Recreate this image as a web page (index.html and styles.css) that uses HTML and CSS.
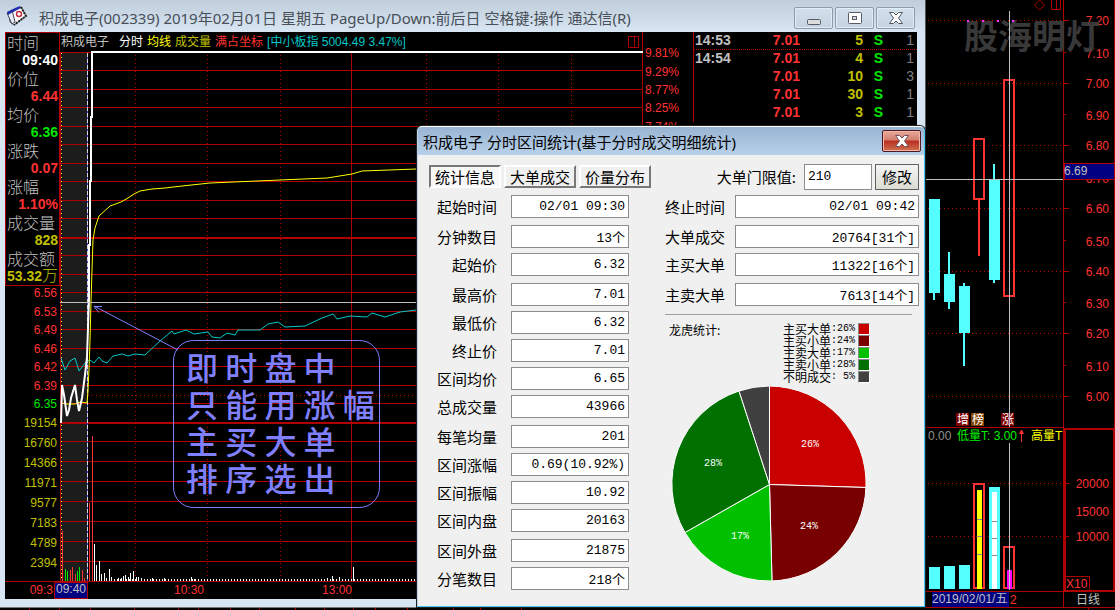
FILE: index.html
```html
<!DOCTYPE html>
<html lang="zh-CN">
<head>
<meta charset="utf-8">
<title>积成电子(002339)</title>
<link rel="stylesheet" href="styles.css">
</head>
<body>
<main class="desktop">
  <div class="left">
    <section class="window">
      <header class="titlebar">
        <svg class="app-icon" width="22" height="22" viewBox="0 0 22 22">
          <path d="M3 9L15 2l5 9-12 9-4-3z" fill="#fff" stroke="#555"/>
          <path d="M1 8l5-3 3 12-3 2z" fill="#e8ecf4" stroke="#445"/>
          <path d="M1 7l8-4 5-2 1 2-8 4-5 3z" fill="#2030b0"/>
          <path d="M15 2l5 9-12 9" fill="none" stroke="#222" stroke-width="2" stroke-dasharray="2 1"/>
          <circle cx="13" cy="9" r="2.5" fill="none" stroke="#c03040" stroke-width="1.5"/>
        </svg>
        <h1 class="title">积成电子(002339) 2019年02月01日 星期五 PageUp/Down:前后日 空格键:操作 通达信(R)</h1>
        <div class="win-buttons">
          <button class="win-btn" aria-label="最小化"><svg width="14" height="14" viewBox="0 0 14 14"><rect x=".5" y="8.500" width="13" height="5" rx="1" fill="#ddd" stroke="#555b66"/></svg></button>
          <button class="win-btn" aria-label="还原"><svg width="14" height="14" viewBox="0 0 14 14"><rect x=".5" y="1.500" width="13" height="11" rx="1" fill="#fff" stroke="#555b66"/><rect x="4.500" y="5.500" width="4" height="3" fill="#dde" stroke="#555b66"/></svg></button>
          <button class="win-btn" aria-label="关闭"><svg width="14" height="14" viewBox="0 0 14 14"><path d="M.5 1.500h4L7 4l2.500-2.500h4L9.500 7l4 5.500h-4L7 10l-2.500 2.500h-4l4-5.500z" fill="#fff" stroke="#555b66"/></svg></button>
        </div>
      </header>
      <div class="body">
        <aside class="side">
          <dl class="info">
            <dt>时间</dt><dd class="white">09:40</dd>
            <dt>价位</dt><dd class="red">6.44</dd>
            <dt>均价</dt><dd class="green">6.36</dd>
            <dt>涨跌</dt><dd class="red">0.07</dd>
            <dt>涨幅</dt><dd class="red">1.10%</dd>
            <dt>成交量</dt><dd class="gold">828</dd>
            <dt>成交额</dt><dd class="gold">53.32<span class="unit">万</span></dd>
          </dl>
          <svg class="chart-text" width="55" height="313" viewBox="5 286 55 313" text-anchor="end">
            <g class="f-red"><text x="57" y="297">6.56</text><text x="57" y="316">6.53</text><text x="57" y="334">6.49</text><text x="57" y="353">6.46</text><text x="57" y="371">6.42</text><text x="57" y="390">6.39</text></g>
            <text class="f-green" x="57" y="408">6.35</text>
            <g class="f-gold"><text x="57" y="427">19154</text><text x="57" y="447">16760</text><text x="57" y="467">14366</text><text x="57" y="487">11971</text><text x="57" y="507">9577</text><text x="57" y="527">7183</text><text x="57" y="547">4789</text><text x="57" y="567">2394</text></g>
            <path class="grid" d="M5 581.500H60"/>
            <text class="f-red" x="53" y="594">09:3</text>
          </svg>
        </aside>
        <div class="plot">
          <div class="plot-head">
            <span class="silver name">积成电子</span><span class="white">分时</span><span class="yellow">均线</span><span class="gold">成交量</span><span class="red">满占坐标</span><span class="cyan">[中小板指 5004.49 3.47%]</span>
            <svg class="pane-icon" width="12" height="12" viewBox="0 0 12 12"><path class="grid" d="M.5.500h10v11H.5zM6.500.500v11"/></svg>
          </div>
          <svg class="chart-text canvas" width="633" height="548" viewBox="60 51 633 548">
            <rect x="61" y="53" width="26" height="528" fill="#1c1c1c"/>
            <path class="grid" d="M60 52.500H643M60 70.500H643M60 89.500H643M60 107.500H643M60 126.500H643M60 144.500H643M60 163.500H643M60 181.500H643M60 200.500H643M60 218.500H643M60 255.500H643M60 274.500H643M60 292.500H643M60 311.500H643M60 329.500H643M60 348.500H643M60 366.500H643M60 385.500H643M60 403.500H643M60 441.500H643M60 461.500H643M60 481.500H643M60 501.500H643M60 521.500H643M60 541.500H643M60 561.500H643M60 581.500H643M60.500 52V582M351.500 52V582M642.500 51V599"/>
            <path class="grid thick" d="M60 238H643M60 423H643"/>
            <path class="grid dots" d="M135.500 55V581M207.500 55V581M280.500 55V581M426.500 55V581M498.500 55V581M571.500 55V581M88 395.500H643"/>
            <path d="M61.500 53V581" stroke="#ff0" stroke-dasharray="1 3"/>
            <path d="M87.500 53V581" stroke="#4848c8"/>
            <path d="M87.500 53V581" stroke="#d8d8d8" stroke-dasharray="4 2"/>
            <path d="M62.500 531V581M70.500 570V581M72.500 567V581M75.500 574V581M82.500 570V581M84.500 578V581M89.500 503V581M92.500 436V581" stroke="#ff3232"/>
            <path d="M65.500 569V581M67.500 571V581M77.500 571V581M79.500 567V581" stroke="#00e600"/>
            <path d="M94.500 544V581M96.500 565V581M99.500 561V581M101.500 574V581M104.500 573V581M106.500 578V581M109.500 569V581M111.500 577V581M118.500 578V581M121.500 578V581M123.500 576V581M125.500 575V581M128.500 577V581M130.500 573V581M133.500 571V581M136.500 577V581M138.500 577V581M141.500 578V581M152.500 578V581M164.500 578V581M191.500 577V581M194.500 579V581M332.500 576V581M327.500 578V581M339.500 577V581M353.500 567V581M372.500 579V581M402.500 579V581" stroke="#fff"/>
            <path d="M114 580H416" stroke="#fff" stroke-width="2" stroke-dasharray="1 2"/>
            <path d="M61 358l4 12 5-9 5-3 4 13 7-9 4-2 4 3 5-6 3 4 5 2 6-7 9-2 6 2 7-2 10 1 15-14 12-10 2 3 12-4 8 4 14-2 4 5 8 1 7-5 8 2 3-5h22l8-6 10-2 7 5 20-1 17-8 11-4 4 5 13-3 17 1 5-4 13 4 15-5 16-2" fill="none" stroke="#00c8c8"/>
            <path d="M62 403l5 1h8l5-2 7 1 1-12 1-22 1-29 1-38 1-32 1-30 2-12 4-12 11-10 11-4 7-4 6-4 6-3 12-2 13-1 17-2 28-3 70-3 47-2 25-4 10-3 54-2" fill="none" stroke="#ff0"/>
            <path d="M61 423l1-38 2 10 3 21 2-6 2-12 4-13 2 15 2 11 3-13 3-23 2-18 2-57V245h1V181h1V117h1V52H643" fill="none" stroke="#fff" stroke-width="2"/>
            <path d="M60 302.500H643" stroke="#c0c0c0"/>
            <g stroke="#8080ff" fill="none">
              <path d="M178 350L94 306M102 306.500H94l5 6"/>
              <rect x="173.500" y="340.500" width="206" height="167" rx="20"/>
            </g>
            <g class="note"><text x="186" y="380">即 时 盘 中</text><text x="186" y="417">只 能 用 涨 幅</text><text x="186" y="454">主 买 大 单</text><text x="186" y="491">排 序 选 出</text></g>
            <rect x="54.500" y="582.500" width="33" height="16" fill="#000080" stroke="#b00000"/>
            <text class="f-silver" x="56" y="593">09:40</text>
            <g class="f-red"><text x="174" y="594">10:30</text><text x="322" y="594">13:00</text><text x="645" y="57">9.81%</text><text x="645" y="76">9.29%</text><text x="645" y="94">8.77%</text><text x="645" y="112">8.25%</text><text x="645" y="131">7.74%</text></g>
          </svg>
        </div>
        <table class="ticks">
          <tr class="ruled"><td class="t">14:53</td><td class="p">7.01</td><td class="v">5</td><td class="s">S</td><td class="n">1</td></tr>
          <tr><td class="t">14:54</td><td class="p">7.01</td><td class="v">4</td><td class="s">S</td><td class="n">1</td></tr>
          <tr><td class="t"></td><td class="p">7.01</td><td class="v">10</td><td class="s">S</td><td class="n">3</td></tr>
          <tr><td class="t"></td><td class="p">7.01</td><td class="v">30</td><td class="s">S</td><td class="n">1</td></tr>
          <tr><td class="t"></td><td class="p">7.01</td><td class="v">3</td><td class="s">S</td><td class="n">1</td></tr>
        </table>
      </div>
    </section>
    <svg class="strip" width="925" height="2" viewBox="0 0 925 2"><path class="grid" d="M29.500 0v2M59.500 0v2M90.500 0v2M134.500 0v2M178.500 0v2M198.500 0v2M230.500 0v2M259.500 0v2M295.500 0v2M324.500 0v2M353.500 0v2M375.500 0v2M407.500 0v2M453.500 0v2M480.500 0v2M521.500 0v2"/></svg>
  </div>

  <section class="daily">
    <svg class="chart-text" width="189" height="610" viewBox="926 0 189 610">
      <path class="grid dots" d="M928 20.500H1063M928 83.500H1063M928 145.500H1063M928 208.500H1063M928 271.500H1063M928 333.500H1063M928 396.500H1063M928 483.500H1063M928 536.500H1063"/>
      <path class="grid" d="M1063.500 0V607M1114.500 0V428M1063 20.500h6M1063 52.500h3M1063 83.500h6M1063 114.500h3M1063 145.500h6M1063 208.500h6M1063 240.500h3M1063 271.500h6M1063 302.500h3M1063 333.500h6M1063 365.500h3M1063 396.500h6M1063 483.500h6M1063 510.500h3M1063 536.500h6M926 427.500H1063M926 591.500H1115M926 607.500H1115M1088.500 608v2M1051.500 0v9.500h9V0M1056.500 0v9M1039.500 0l5 5-5 5-5-5z"/>
      <rect class="grid thick" x="1065" y="429" width="49" height="162"/>
      <g class="f-red" text-anchor="end"><text x="1109" y="25">7.20</text><text x="1109" y="58">7.10</text><text x="1109" y="88">7.00</text><text x="1109" y="120">6.90</text><text x="1109" y="150">6.80</text><text x="1109" y="183">6.70</text><text x="1109" y="213">6.60</text><text x="1109" y="246">6.50</text><text x="1109" y="276">6.40</text><text x="1109" y="308">6.30</text><text x="1109" y="338">6.20</text><text x="1109" y="371">6.10</text><text x="1109" y="401">6.00</text><text x="1109" y="488">20000</text><text x="1109" y="516">15000</text><text x="1109" y="541">10000</text></g>
      <rect x="1064.500" y="163.500" width="50" height="16" fill="#000080" stroke="#b00000"/>
      <text class="f-silver" x="1064" y="175">6.69</text>
      <path fill="#54ffff" d="M929 199h11v94h-11zM933 293h2v7h-2zM944 274h11v28h-11zM948 252h2v57h-2zM959 286h11v47h-11zM963 283h2v83h-2zM989 180h11v100h-11zM993 164h2v119h-2zM929 567h11v22h-11zM944 566h11v23h-11zM959 565h11v24h-11zM989 487h11v102h-11z"/>
      <path fill="none" stroke="#ff3232" stroke-width="2" d="M974 139h10v60h-10zM979 199v57M1004 80h10v216h-10zM974 484h10v104h-10zM1004 547h10v41h-10z"/>
      <path fill="#ff0" d="M977 490h5v99h-5z"/><path fill="#fff" d="M992 492h5v97h-5z"/>
      <path stroke="#888" d="M977 519.500h5M977 536.500h5M977 554.500h5M992 521.500h5M992 538.500h5M992 555.500h5"/>
      <path fill="#f0f" d="M1007 570h5v19h-5z"/>
      <text class="watermark" x="964" y="49">股海明灯</text>
      <path fill="#f3f" d="M967 20h2v2h-2zM982 20h2v2h-2zM997 20h2v2h-2zM1012 20h2v2h-2z"/>
      <rect x="956" y="413" width="13" height="13" fill="#800000"/><rect x="971" y="413" width="13" height="13" fill="#804000"/><rect x="1001" y="413" width="13" height="13" fill="#800000"/>
      <g fill="#fff"><text x="957" y="424">增</text><text x="972" y="424">榜</text><text x="1002" y="424">涨</text></g>
      <path stroke="#c0c0c0" d="M926 179.500H1063M1009.500 11V427M1009.500 443V590"/>
      <text x="928" y="440" fill="#909090">0.00</text><text x="957" y="440" fill="#00f000">低量T: 3.00</text>
      <path d="M1021 430h1l2 4h-2v8h-1v-8h-2z" fill="#ff3232"/>
      <text x="1031" y="440" fill="#ff0">高量T</text>
      <rect class="grid" x="1064.500" y="576.500" width="25" height="14"/><text class="f-red" x="1066" y="588">X10</text>
      <rect x="932" y="592" width="77" height="15" fill="#000080"/>
      <text class="f-silver" x="932" y="603">2019/02/01/五</text><text class="f-red" x="1010" y="604">2</text><text class="f-silver" x="1076" y="604">日线</text>
    </svg>
  </section>

  <section class="dialog" role="dialog" aria-labelledby="dlg-title">
    <header class="dlg-head">
      <h2 class="title" id="dlg-title">积成电子 分时区间统计(基于分时成交明细统计)</h2>
      <button class="dlg-close" aria-label="关闭"><svg width="14" height="14" viewBox="0 0 14 14"><path d="M.5 1.500h4L7 4l2.500-2.500h4L9.500 7l4 5.500h-4L7 10l-2.500 2.500h-4l4-5.500z" fill="#fff" stroke="#705058"/></svg></button>
    </header>
    <div class="toolbar">
      <button class="tab active">统计信息</button><button class="tab">大单成交</button><button class="tab">价量分布</button>
      <label class="limit-label" for="limit">大单门限值:</label><input class="box limit" id="limit" value="210"><button class="edit">修改</button>
    </div>
    <div class="columns">
      <div class="fields narrow">
        <div class="group"><div class="row"><label for="a1">起始时间</label><input class="box" id="a1" readonly value="02/01 09:30"></div></div>
        <div class="group"><div class="row"><label for="a2">分钟数目</label><input class="box" id="a2" readonly value="13个"></div>
        <div class="row"><label for="a3">起始价</label><input class="box" id="a3" readonly value="6.32"></div></div>
        <div class="group"><div class="row"><label for="a4">最高价</label><input class="box" id="a4" readonly value="7.01"></div>
        <div class="row"><label for="a5">最低价</label><input class="box" id="a5" readonly value="6.32"></div>
        <div class="row"><label for="a6">终止价</label><input class="box" id="a6" readonly value="7.01"></div>
        <div class="row"><label for="a7">区间均价</label><input class="box" id="a7" readonly value="6.65"></div>
        <div class="row"><label for="a8">总成交量</label><input class="box" id="a8" readonly value="43966"></div></div>
        <div class="group"><div class="row"><label for="a9">每笔均量</label><input class="box" id="a9" readonly value="201"></div>
        <div class="row"><label for="a10">区间涨幅</label><input class="box" id="a10" readonly value="0.69(10.92%)"></div>
        <div class="row"><label for="a11">区间振幅</label><input class="box" id="a11" readonly value="10.92"></div>
        <div class="row"><label for="a12">区间内盘</label><input class="box" id="a12" readonly value="20163"></div></div>
        <div class="group"><div class="row"><label for="a13">区间外盘</label><input class="box" id="a13" readonly value="21875"></div>
        <div class="row"><label for="a14">分笔数目</label><input class="box" id="a14" readonly value="218个"></div></div>
      </div>
      <div class="right">
        <div class="fields">
          <div class="group"><div class="row"><label for="b1">终止时间</label><input class="box" id="b1" readonly value="02/01 09:42"></div></div>
          <div class="group"><div class="row"><label for="b2">大单成交</label><input class="box" id="b2" readonly value="20764[31个]"></div>
          <div class="row"><label for="b3">主买大单</label><input class="box" id="b3" readonly value="11322[16个]"></div></div>
          <div class="group"><div class="row"><label for="b4">主卖大单</label><input class="box" id="b4" readonly value="7613[14个]"></div></div>
        </div>
        <div class="stats">
          <span class="stats-title">龙虎统计:</span>
          <ul class="legend">
            <li>主买大单<span class="pct">:26%</span><i class="swatch c1"></i></li>
            <li>主买小单<span class="pct">:24%</span><i class="swatch c2"></i></li>
            <li>主卖大单<span class="pct">:17%</span><i class="swatch c3"></i></li>
            <li>主卖小单<span class="pct">:28%</span><i class="swatch c4"></i></li>
            <li>不明成交<span class="pct">: 5%</span><i class="swatch c5"></i></li>
          </ul>
        </div>
        <svg class="pie" width="197" height="197" viewBox="671 385 197 197">
          <g stroke="#fff" stroke-width="1">
            <path fill="#c80000" d="M770.500 484.500V386A97.500 97.500 0 0 1 867 487.500z"/>
            <path fill="#780000" d="M770.500 484.500L867 487.500A97.500 97.500 0 0 1 773 581z"/>
            <path fill="#00c000" d="M770.500 484.500L773 581A97.500 97.500 0 0 1 686 532.500z"/>
            <path fill="#007000" d="M770.500 484.500L686 532.500A97.500 97.500 0 0 1 740 391z"/>
            <path fill="#404040" d="M770.500 484.500L740 391A97.500 97.500 0 0 1 770.500 386z"/>
          </g>
          <circle cx="769.500" cy="483.500" r="98" fill="none" stroke="#f0f0f0" stroke-width="1"/>
          <g class="pie-text"><text x="802" y="447">26%</text><text x="801" y="529">24%</text><text x="732" y="539">17%</text><text x="705" y="466">28%</text></g>
        </svg>
      </div>
    </div>
  </section>
</main>
</body>
</html>
```
FILE: styles.css
```css
* { box-sizing: border-box; }
body { margin: 0; background: #000; font-family: "Noto Sans CJK SC", sans-serif; }
h1, h2, dl, dd, ul { margin: 0; padding: 0; }
svg { display: block; flex: none; }
button { font-family: inherit; padding: 0; cursor: pointer; }

.desktop { position: relative; display: grid; grid-template-columns: minmax(0, 1fr) 189px; min-height: 100vh; overflow: hidden; }
.left { min-width: 0; overflow: hidden; }
.window { background: #d8e5f2; border-right: 1px solid #555; border-bottom: 1px solid #777; padding: 0 8px 8px 5px; }
.titlebar { display: flex; align-items: center; height: 32px; margin: 0 -8px 0 -5px; padding: 0 10px 0 6px; gap: 11px; background: linear-gradient(#c0cedc, #d8e5f2); }
.title { flex: 1; font-family: "Noto Sans", "Noto Sans CJK SC", sans-serif; font-size: 15px; line-height: 24px; font-weight: 400; white-space: nowrap; color: #484f58; padding-top: 3px; }
.win-buttons { display: flex; gap: 2px; padding-top: 3px; }
.win-btn { display: flex; align-items: center; justify-content: center; width: 39px; height: 22px; border: 1px solid #8d9bab; border-radius: 2px; background: linear-gradient(#d3dfeb, #c5d3e2); box-shadow: inset 0 0 0 1px #e2ecf6; }

.body { display: flex; background: #000; }
.side { flex: none; width: 55px; }
.info { height: 254px; border: 1px solid #b00000; padding: 0 1px; }
.info dt, .info dd { height: 18px; line-height: 18px; white-space: nowrap; }
.info dt { font-size: 16px; font-weight: 300; color: #c0c0c0; }
.info dd { font-family: "Liberation Sans", "Noto Sans CJK SC", sans-serif; font-size: 14px; font-weight: 700; display: flex; justify-content: flex-end; }
.unit { font-size: 16px; font-weight: 300; }
.white { color: #fff; } .red { color: #ff3232; } .green { color: #00e600; } .gold { color: #c0c000; }
.yellow { color: #ff0; } .silver { color: #c0c0c0; } .cyan { color: #00c8c8; }

.plot { flex: none; width: 633px; }
.plot-head { display: flex; align-items: center; gap: 4px; height: 19px; margin-right: 50px; padding: 0 2px 0 1px; border-right: 1px solid #b00000; font-family: "Liberation Sans", "Noto Sans CJK SC", sans-serif; font-size: 12px; line-height: 18px; white-space: nowrap; }
.name { margin-right: 6px; }
.pane-icon { margin-left: auto; }
.canvas { overflow: visible; }
.chart-text { font-family: "Liberation Sans", "Noto Sans CJK SC", sans-serif; font-size: 12px; white-space: pre; }
.grid { fill: none; stroke: #b00000; }
.thick { stroke-width: 2; }
.dots { stroke: #c80000; stroke-dasharray: 1 3; }
.f-red { fill: #ff3232; } .f-green { fill: #00e600; } .f-gold { fill: #c0c000; } .f-silver { fill: #c0c0c0; }
.note { fill: #8080ff; font-family: "Noto Sans CJK SC", sans-serif; font-size: 32px; font-weight: 500; }
.watermark { fill: #404040; fill-opacity: .9; font-family: "Noto Sans CJK SC", sans-serif; font-size: 34px; font-weight: 700; }

.ticks { flex: 1; align-self: flex-start; table-layout: fixed; border-spacing: 0; border-left: 1px solid #b00000; font: 700 14px/17px "Liberation Sans", sans-serif; }
.ticks td { padding: 0; height: 18px; text-align: right; border-bottom: 1px solid #000; }
.ticks .ruled td { border-bottom: 1px dotted #b00000; }
.ticks .t { width: 37px; padding-left: 1px; text-align: left; color: #c0c0c0; }
.ticks .p { width: 69px; color: #ff3232; }
.ticks .v { width: 63px; color: #c0c000; }
.ticks .s { width: 20px; color: #00e600; }
.ticks .n { padding-right: 3px; color: #808080; font-weight: 400; }
.strip { height: 2px; }

.dialog { position: absolute; left: 417px; top: 126px; width: 508px; padding-bottom: 16px; background: #f0f0f0; border: 1px solid #40c8f0; border-top-color: #fff; border-left-color: #b9d1ea; border-radius: 5px 5px 0 0; box-shadow: 0 0 0 1px #222; }
.dlg-head { display: flex; align-items: center; height: 28px; padding: 0 3px 0 5px; border-radius: 4px 4px 0 0; background: linear-gradient(#98b4d2, #b9d1ea); }
.dlg-head .title { color: #000; padding-top: 1px; }
.dlg-close { display: flex; align-items: center; justify-content: center; width: 39px; height: 22px; border: 1px solid #501820; border-radius: 2px; background: linear-gradient(#e8a898, #d48070 45%, #b83020 50%, #d07050); box-shadow: inset 0 0 0 1px #f0b8a8; }
.toolbar { display: flex; align-items: center; gap: 3px; padding: 0 5px 0 11px; height: 40px; font-size: 15px; }
.tab { flex: none; width: 72px; height: 23px; font-size: 15px; line-height: 19px; color: #000; background: #f0f0f0; border: 2px solid #696969; border-color: #fff #787878 #787878 #fff; }
.tab.active { background: #f8f8f8; border-color: #787878 #fff #fff #787878; }
.limit-label { margin-left: auto; line-height: 22px; padding-right: 5px; white-space: nowrap; }
.box { height: 23px; min-width: 0; margin: 0; padding: 0 3px; border: 1px solid #8c8c8c; border-radius: 0; background: #fff; color: #000; font-family: "Liberation Mono", "Noto Sans CJK SC", monospace; font-size: 13px; text-align: right; }
.limit { width: 68px; height: 26px; text-align: left; }
.edit { width: 44px; height: 26px; font-size: 15px; line-height: 20px; color: #000; border: 1px solid #606060; background: linear-gradient(#f4f4f4, #dcdcd4); }
.columns { display: flex; justify-content: space-between; padding: 0 5px 0 19px; }
.toolbar { padding-top: 3px; }
.fields, .group { display: flex; flex-direction: column; }
.fields { gap: 7px; }
.group { gap: 5px; }
.narrow { width: 192px; }
.row { display: flex; align-items: center; gap: 14px; font-size: 15px; height: 23px; line-height: 22px; }
.row label { flex: none; width: 60px; text-align: right; }
.row .box { flex: 1; }
.right { width: 254px; }
.right .row { gap: 10px; }
.stats { display: flex; justify-content: space-between; margin: 8px 7px 0 0; padding: 8px 42px 0 4px; border-top: 1px solid #a0a0a0; font-size: 12px; line-height: 12px; }
.stats-title { padding-top: 1px; }
.legend { list-style: none; }
.legend li { display: flex; align-items: center; height: 12px; }
.pct { width: 24px; font: 10px/12px "Liberation Mono", monospace; white-space: pre; }
.swatch { width: 12px; height: 12px; margin-left: 3px; border: 1px solid #888; border-right-color: #fff; border-bottom-color: #fff; }
.c1 { background: #c80000; } .c2 { background: #780000; } .c3 { background: #00c000; } .c4 { background: #007000; } .c5 { background: #404040; }
.pie { margin: 2px 0 0 5px; }
.pie-text { fill: #fff; font-family: "Liberation Mono", monospace; font-size: 10px; }
```
